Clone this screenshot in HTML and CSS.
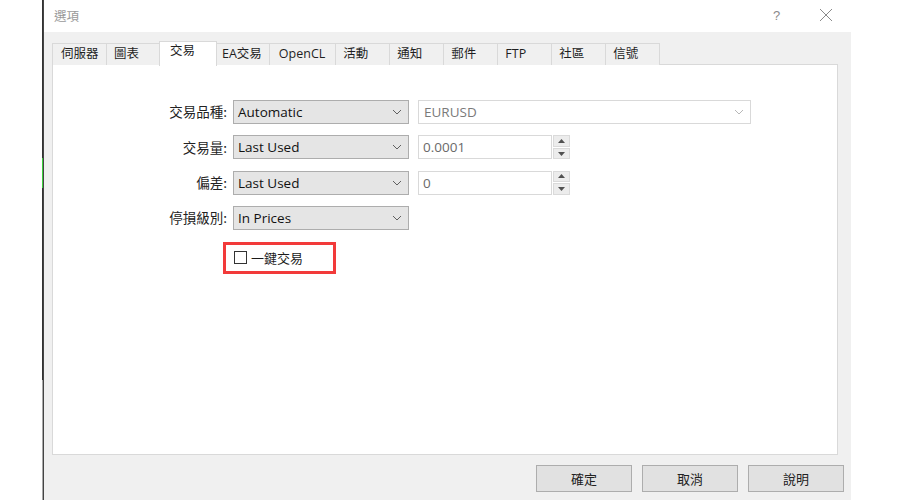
FILE: index.html
```html
<!DOCTYPE html>
<html>
<head>
<meta charset="utf-8">
<link rel="stylesheet" href="styles.css">
</head>
<body>
<div class="screen">
  <div class="gutter"><div class="edge"><span class="edge-mark"></span></div></div>
  <div class="window">
    <div class="titlebar">
      <span class="title">選項</span>
      <span class="help">?</span>
      <span class="close"><svg width="14" height="14" viewBox="0 0 14 14"><path d="M1 1L13 13M13 1L1 13" stroke="#8a8a8a" stroke-width="1" fill="none"/></svg></span>
    </div>
    <div class="body">
      <div class="tabs">
        <div class="tab">伺服器</div>
        <div class="tab">圖表</div>
        <div class="tab active">交易</div>
        <div class="tab">EA交易</div>
        <div class="tab wide">OpenCL</div>
        <div class="tab">活動</div>
        <div class="tab">通知</div>
        <div class="tab">郵件</div>
        <div class="tab">FTP</div>
        <div class="tab">社區</div>
        <div class="tab">信號</div>
      </div>
      <div class="panel">
        <div class="form">
          <label class="lbl">交易品種:</label>
          <div class="combo"><span>Automatic</span><svg class="chev" width="10" height="6" viewBox="0 0 10 6"><path d="M1 1L5 5L9 1" stroke="#606060" fill="none"/></svg></div>
          <div class="combo disabled wide"><span>EURUSD</span><svg class="chev" width="10" height="6" viewBox="0 0 10 6"><path d="M1 1L5 5L9 1" stroke="#b8b8b8" fill="none"/></svg></div>

          <label class="lbl">交易量:</label>
          <div class="combo"><span>Last Used</span><svg class="chev" width="10" height="6" viewBox="0 0 10 6"><path d="M1 1L5 5L9 1" stroke="#606060" fill="none"/></svg></div>
          <div class="spin"><div class="spin-input">0.0001</div><div class="spin-btns"><div class="sb"><svg width="7" height="4" viewBox="0 0 7 4"><path d="M0 4L3.5 0L7 4Z" fill="#505050"/></svg></div><div class="sb"><svg width="7" height="4" viewBox="0 0 7 4"><path d="M0 0L3.5 4L7 0Z" fill="#505050"/></svg></div></div></div>

          <label class="lbl">偏差:</label>
          <div class="combo"><span>Last Used</span><svg class="chev" width="10" height="6" viewBox="0 0 10 6"><path d="M1 1L5 5L9 1" stroke="#606060" fill="none"/></svg></div>
          <div class="spin"><div class="spin-input">0</div><div class="spin-btns"><div class="sb"><svg width="7" height="4" viewBox="0 0 7 4"><path d="M0 4L3.5 0L7 4Z" fill="#505050"/></svg></div><div class="sb"><svg width="7" height="4" viewBox="0 0 7 4"><path d="M0 0L3.5 4L7 0Z" fill="#505050"/></svg></div></div></div>

          <label class="lbl">停損級別:</label>
          <div class="combo"><span>In Prices</span><svg class="chev" width="10" height="6" viewBox="0 0 10 6"><path d="M1 1L5 5L9 1" stroke="#606060" fill="none"/></svg></div>
          <div></div>
        </div>
        <div class="oneclick">
          <div class="highlight"><span class="box"></span><span class="cbtext">一鍵交易</span></div>
        </div>
      </div>
      <div class="buttons">
        <div class="btn">確定</div>
        <div class="btn">取消</div>
        <div class="btn">說明</div>
      </div>
    </div>
  </div>
  <div class="rest"></div>
</div>
</body>
</html>
```
FILE: styles.css
```css
html, body {
  margin: 0;
  padding: 0;
  background: #ffffff;
}
body {
  font-family: "Open Sans", "Noto Sans CJK TC", sans-serif;
  color: #1a1a1a;
}
.screen {
  display: flex;
  width: 900px;
  height: 500px;
  overflow: hidden;
}
.gutter {
  width: 43px;
  display: flex;
  justify-content: flex-end;
  flex-shrink: 0;
}
.edge {
  width: 1px;
  height: 500px;
  background: linear-gradient(#333 0, #333 380px, #a8a8a8 380px, #a8a8a8 500px);
  position: relative;
}
.edge-mark {
  position: absolute;
  left: 0;
  top: 158px;
  width: 1px;
  height: 30px;
  background: #3ccf3c;
}
.window {
  width: 807px;
  flex-shrink: 0;
  display: flex;
  flex-direction: column;
  border-left: 1px solid #444;
}
.rest {
  flex: 1;
}
.titlebar {
  height: 32px;
  background: #fff;
  display: flex;
  align-items: center;
  font-size: 13px;
}
.title {
  margin-left: 10px;
  color: #9a9a9a;
  font-family: "Noto Sans CJK TC", sans-serif;
  font-size: 12.5px;
  flex: 1;
  margin-top: -2px;
}
.help {
  color: #8a8a8a;
  font-family: "Liberation Sans", sans-serif;
  font-size: 13px;
  width: 14px;
  margin-right: 32px;
  margin-top: -2px;
}
.close {
  display: flex;
  margin-right: 18px;
  margin-top: -3px;
}
.body {
  flex: 1;
  background: #f0f0f0;
  display: flex;
  flex-direction: column;
  padding: 9px 7px 0 8px;
}
.tabs {
  display: flex;
  align-items: flex-end;
  height: 24px;
  position: relative;
  z-index: 1;
  font-size: 13px;
}
.tab {
  height: 21px;
  min-width: 39px;
  padding: 0 7px;
  border: 1px solid #d9d9d9;
  border-bottom: none;
  margin-left: -1px;
  background: #f0f0f0;
  color: #1f1f1f;
  display: flex;
  align-items: center;
  line-height: 1;
  font-family: "Open Sans", "Noto Sans CJK TC", sans-serif;
  font-size: 12.5px;
}
.tab.wide {
  padding: 0 10px 0 9px;
}
.tab:first-child {
  margin-left: 0;
  min-width: 38px;
  padding-left: 8px;
}
.tab.active {
  background: #fff;
  margin-left: -2px;
  margin-right: -2px;
  padding: 0 10px 5px 10px;
  box-sizing: border-box;
  min-width: 58px;
  position: relative;
  z-index: 2;
  height: 25px;
  margin-bottom: -1px;
}
.panel {
  width: 786px;
  height: 391px;
  background: #fff;
  border: 1px solid #d9d9d9;
  box-sizing: border-box;
  margin-top: -1px;
  padding-top: 35px;
}
.form {
  display: grid;
  grid-template-columns: 177px 176px 345px;
  grid-auto-rows: 24px;
  row-gap: 11.3px;
  column-gap: 0;
  font-size: 13.5px;
}
.lbl {
  font-family: "Noto Sans CJK TC", sans-serif;
  font-size: 13.5px;
  text-align: right;
  align-self: center;
  padding-right: 3px;
  color: #222;
  line-height: 1;
}
.combo {
  grid-column: 2;
  box-sizing: border-box;
  height: 24px;
  margin-left: 3px;
  background: #e5e5e5;
  border: 1px solid #adadad;
  display: flex;
  align-items: center;
  justify-content: space-between;
  padding: 0 6px 0 4px;
  color: #111;
  width: 176px;
}
.combo.disabled {
  grid-column: 3;
  background: #fff;
  border-color: #d9d9d9;
  color: #7a7a7a;
  margin-left: 12px;
  width: 333px;
  padding-left: 5px;
}
.spin {
  grid-column: 3;
  display: flex;
  margin-left: 12px;
  gap: 1px;
}
.spin-input {
  box-sizing: border-box;
  width: 134px;
  height: 24px;
  border: 1px solid #d9d9d9;
  background: #fff;
  color: #6a6a6a;
  display: flex;
  align-items: center;
  padding-left: 4px;
}
.spin-btns {
  display: flex;
  flex-direction: column;
  width: 17px;
  gap: 1px;
}
.sb {
  flex: 1;
  background: #ececec;
  border: 1px solid #dadada;
  display: flex;
  align-items: center;
  justify-content: center;
}
.oneclick {
  padding-left: 170px;
  margin-top: 12px;
}
.highlight {
  display: inline-flex;
  align-items: center;
  box-sizing: border-box;
  width: 113px;
  height: 32px;
  border: 3px solid #f23a3a;
  padding-left: 8px;
}
.box {
  width: 11px;
  height: 11px;
  border: 1px solid #333;
  margin-right: 4px;
  background: #fff;
}
.cbtext {
  font-family: "Noto Sans CJK TC", sans-serif;
  font-size: 13px;
  color: #1a1a1a;
  line-height: 1;
}
.buttons {
  display: flex;
  justify-content: flex-end;
  gap: 10px;
  margin-top: 10px;
  margin-right: 0;
}
.btn {
  box-sizing: border-box;
  width: 96px;
  height: 27px;
  background: #e1e1e1;
  border: 1px solid #adadad;
  display: flex;
  align-items: center;
  justify-content: center;
  font-family: "Noto Sans CJK TC", sans-serif;
  font-size: 13px;
  color: #222;
}
```
